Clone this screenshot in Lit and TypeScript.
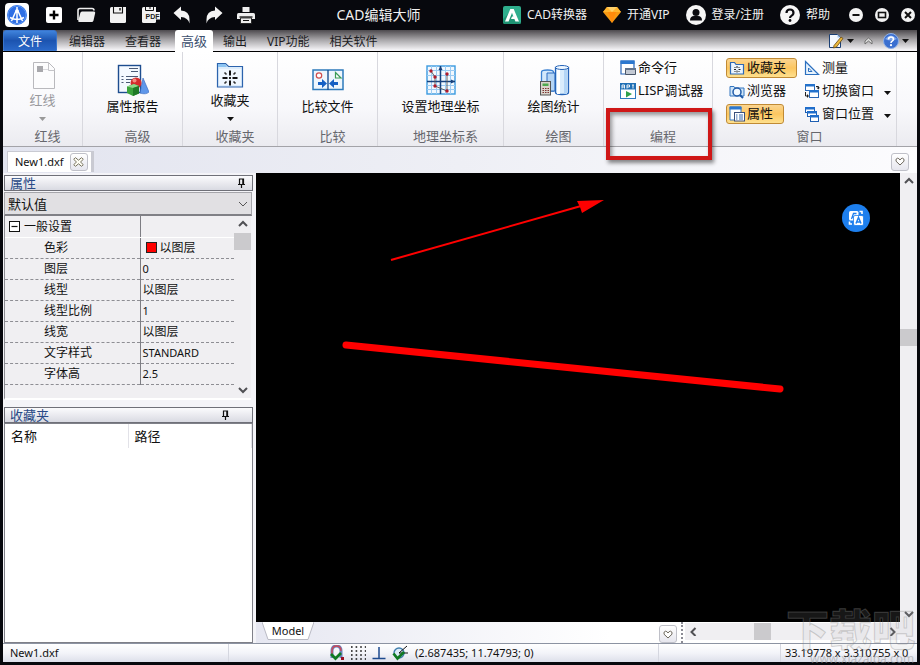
import { LitElement, html, css, svg, TemplateResult, SVGTemplateResult } from "lit";
import { customElement, property } from "lit/decorators.js";
import { classMap } from "lit/directives/class-map.js";
import { styleMap } from "lit/directives/style-map.js";

const icon = (w: number, h: number, body: SVGTemplateResult): TemplateResult =>
  html`<svg width=${w} height=${h} viewBox="0 0 ${w} ${h}" aria-hidden="true">${body}</svg>`;

/* ---------- title bar icons ---------- */
const logo = icon(24, 24, svg`
  <rect width="24" height="24" rx="4" fill="#fff"/>
  <circle cx="12" cy="12" r="10" fill="#2f6fe4"/>
  <circle cx="12" cy="12" r="9" fill="none" stroke="#5c97f5"/>
  <path d="M12 4v3M11.500 7 6.500 18M12.500 7l5 11M5 14.500q7 4 14 0M12 8v12" fill="none" stroke="#fff" stroke-width="1.500"/>
  <circle cx="12" cy="8" r="1.800" fill="#fff"/>`);

const quick: [string, TemplateResult][] = [
  ["新建", icon(20, 20, svg`<rect x="2" y="2" width="16" height="16" rx="2" fill="#fff"/><path d="M10 5.500v9M5.500 10h9" stroke="#000" stroke-width="2.400"/>`)],
  ["打开", icon(20, 20, svg`<path d="M2 15V5.500q0-2 2-2h12q2 0 2 2" fill="none" stroke="#eee" stroke-width="1.600"/><path d="M6 6.500H18q1.500 0 1.200 1.500l-1.700 7.500q-.4 1.500-1.900 1.500H3.500q-1.700 0-1.200-1.500l2-7.500Q4.600 6.500 6 6.500z" fill="#eee"/>`)],
  ["保存", icon(20, 20, svg`<path d="M2 3.500Q2 2 3.500 2H18v14.500q0 1.500-1.500 1.500h-13Q2 18 2 16.500z" fill="#f2f2f2"/><path d="M5.500 2v6h9V2" fill="none" stroke="#111" stroke-width="1.100"/><path d="M12 3v2.500" stroke="#111" stroke-width="1.400"/>`)],
  ["导出 PDF", icon(20, 20, svg`<path d="M2 3.500Q2 2 3.500 2H16v14.500q0 1.500-1.500 1.500h-11Q2 18 2 16.500z" fill="#f2f2f2"/><path d="M5.500 2v3.500h8V2M10 2v2" fill="none" stroke="#111"/><rect x="4.500" y="7" width="15.500" height="7.500" fill="#f2f2f2"/><text x="5.500" y="13.500" font-family="Liberation Sans" font-weight="700" font-size="7" fill="#222">PDF</text>`)],
  ["撤销", icon(20, 20, svg`<path d="M1.500 8 9 1.500v4q8.500.5 8.500 9v4q-1.500-6-8.500-6.500v3z" fill="#f4f4f4"/>`)],
  ["重做", icon(20, 20, svg`<path d="M18.500 8 11 1.500v4q-8.500.5-8.500 9v4q1.500-6 8.500-6.500v3z" fill="#f4f4f4"/>`)],
  ["打印", icon(20, 20, svg`<path d="M6.500 2h7v5h-7z" fill="#eee"/><path d="M1 9.500Q1 8 2.500 8h15Q19 8 19 9.500V14H1z" fill="#eee"/><path d="M3.500 12h13" stroke="#111" stroke-width="1.300"/><path d="M4.500 13h11v5.500h-11z" fill="#eee" stroke="#111" stroke-width=".8"/><path d="M7 15.500h6" stroke="#111"/>`)],
];

const converter = icon(18, 18, svg`<rect width="18" height="18" rx="2" fill="#2fae8d"/><path d="M0 13 6 7l12 11H2q-2 0-2-2z" fill="#1f9474"/><path d="M2 15.500 7.300 3h3.400L16 15.500h-3.600l-1-2.500H8l1-2.600h1.400L9 6.800 5.600 15.500z" fill="#fff"/>`);
const diamond = icon(18, 16, svg`<path d="M4 0h10l4 5-9 11L0 5z" fill="#f79a12"/><path d="M4 0h10l4 5H0z" fill="#ffb52e"/><path d="M5 5h8l-4 11z" fill="#ff8a0c"/><path d="M4 0l5 5 5-5z" fill="#ffd06a"/>`);
const user = icon(20, 20, svg`<circle cx="10" cy="10" r="10" fill="#f6f6f6"/><circle cx="10" cy="7.500" r="3.500" fill="#0b0b10"/><path d="M4 15.500q0-4.500 4-4.500h4q4 0 4 4.500z" fill="#0b0b10"/>`);
const help = icon(20, 20, svg`<circle cx="10" cy="10" r="10" fill="#f6f6f6"/><path d="M6.500 8q0-3.500 3.500-3.500T13.500 8q0 1.500-1.800 2.600Q10 11.500 10 13" fill="none" stroke="#0b0b10" stroke-width="2.200"/><circle cx="10" cy="15.500" r="1.400" fill="#0b0b10"/>`);
const winMin = icon(14, 14, svg`<circle cx="7" cy="7" r="7" fill="#f3f3f3"/><path d="M3.500 7h7" stroke="#111" stroke-width="2"/>`);
const winMax = icon(14, 14, svg`<circle cx="7" cy="7" r="7" fill="#f3f3f3"/><rect x="3.500" y="4.500" width="7" height="5" fill="none" stroke="#111" stroke-width="1.600"/>`);
const winClose = icon(14, 14, svg`<circle cx="7" cy="7" r="7" fill="#f3f3f3"/><path d="M4 4l6 6M10 4l-6 6" stroke="#111" stroke-width="2"/>`);

/* ---------- menu bar icons ---------- */
const editPage = icon(16, 16, svg`<path d="M1.500 1.500h8l3 3v10h-11z" fill="#f4f9ff" stroke="#1b3f73"/><path d="M9.500 1.500v3h3z" fill="#9fc4ee"/><path d="M6 12.500 13 4l2 1.500L8.500 14 5.500 15z" fill="#eab73c" stroke="#6a4a12" stroke-width=".8"/>`);
const helpBall = icon(16, 16, svg`<circle cx="8" cy="8" r="7.500" fill="#3a6fd0" stroke="#8fb0e6"/><path d="M2 6q6-7 12 0-6 3-12 0z" fill="#7fa6ea"/><path d="M5.500 6.500q0-2.500 2.500-2.500t2.500 2.300q0 1-1.300 1.800Q8 8.800 8 10" fill="none" stroke="#fff" stroke-width="1.600"/><circle cx="8" cy="12.200" r="1.100" fill="#fff"/>`);
const chevUp = icon(9, 8, svg`<path d="M1 4l3.500-3L8 4v3L4.500 4 1 7z" fill="#ddd" stroke="#666" stroke-width=".9"/>`);
const caret = (c = "#111") => icon(7, 4, svg`<path d="M0 0h7L3.500 4z" fill=${c}/>`);

/* ---------- ribbon icons ---------- */
const bigRedline = icon(32, 32, svg`<path d="M6.500 2.500h15l6 6v20h-21z" fill="#fcfcfd" stroke="#b9b9bd"/><path d="M21.500 2.500v8h6" fill="none" stroke="#c4c4c8"/><rect x="10" y="6" width="6" height="6" fill="#a8a8ac"/><path d="M16 9.500h5" stroke="#dadade"/>`);
const bigReport = icon(32, 32, svg`<rect x="1.500" y="1.500" width="22" height="27" fill="#f4f9ff" stroke="#1d4d8f" stroke-width="1.400"/>
  <path d="M12 4.500h9M14 7.500h7M4.500 12.500h2M9 12.500h12M4.500 15.500h2M9 15.500h7M4.500 18.500h2M9 18.500h4" stroke="#4a5a76"/>
  <path d="M26 14l6 14q-3 3-9 1z" fill="#5f97ea" stroke="#2f63bc" stroke-width=".6"/><circle cx="19" cy="19" r="5.500" fill="#d42c2c"/><circle cx="17.500" cy="16.500" r="2" fill="#f38b80"/>
  <path d="M10 22.500l7-2.500 5 2v7.500l-6 2.500-6-3z" fill="#3ba33c"/><path d="M10 22.500l7-2.500 5 2-6 2z" fill="#8fd98a"/><path d="M16 24v8l6-2.500V22z" fill="#1f7a27"/>`);
const bigFolder = icon(32, 32, svg`<path d="M3.500 3.500h8l3 3h14v20.500h-25z" fill="#dcecfb" stroke="#2c63ad" stroke-width="1.200"/><path d="M5 9h22v16H5z" fill="#f0f7fe"/><path d="M4 4h7l2 3H4z" fill="#8cc4f2"/>
  <path d="M16 10.500v5M16 20.500v5M8.500 18h5M18.500 18h5" stroke="#111" stroke-width="2"/><path d="M10.500 12.500l2 2M21.500 12.500l-2 2M10.500 23.500l2-2M21.500 23.500l-2-2" stroke="#333" stroke-width="1.700"/><rect x="15" y="17" width="2" height="2" fill="#222"/>`);
const bigCompare = icon(32, 32, svg`<rect x="1" y="6" width="30" height="19.500" fill="#eef6fd" stroke="#2d7abb" stroke-width="1.500"/><path d="M16 6v20" stroke="#174f91" stroke-width="1.400"/>
  <circle cx="7" cy="11.500" r="2.700" fill="#fff" stroke="#cf4d4d" stroke-width="1.200"/><path d="M23.500 8.500v5.500h5.500z" fill="#fff" stroke="#3a9b55" stroke-width="1.200"/>
  <path d="M6 18h4v-3l5 4.500-5 4.500v-3H6zM26 18h-4v-3l-5 4.500 5 4.500v-3h4z" fill="#1560c4"/>`);
const bigGeo = icon(32, 32, svg`<rect x="2" y="2" width="28" height="28" fill="#f2f8fe" stroke="#3a9ae0" stroke-width="1.400"/>
  <path d="M6.500 2v28M11.500 2v28M20.500 2v28M25.500 2v28M2 6.500h28M2 11.500h28M2 21.500h28M2 25.500h28" stroke="#9ccbf2"/>
  <path d="M15.500 2v28M2 17.500h28" stroke="#16417d" stroke-width="1.500"/><path d="M13.500 6l2-4 2 4zM26 15.500l4 2-4 2z" fill="#16417d"/>
  <path d="M6 7l4 6v9l12 5V10" fill="none" stroke="#555" stroke-width=".9"/><g fill="#b01b2c"><circle cx="6" cy="7" r="1.700"/><circle cx="10" cy="13" r="1.700"/><circle cx="10" cy="22" r="1.700"/><circle cx="22" cy="27" r="1.700"/><circle cx="22" cy="10" r="1.700"/></g>`);
const bigStats = icon(32, 32, svg`<path d="M3.500 8q0-2 6-2t6 2v19h-12z" fill="#d3e8fb" stroke="#3c82d2" stroke-width="1.300"/><path d="M9 9v18h8V9z" fill="#b5d5f5" stroke="#2d6cc0"/>
  <path d="M17.500 3.500v25q0 2 6.500 2t6.500-2v-25z" fill="#d9ecfc" stroke="#2563b8" stroke-width="1.300"/><path d="M20.500 5v25" stroke="#fff" stroke-width="3"/><path d="M27.500 5v25" stroke="#b3d5f6" stroke-width="3"/><ellipse cx="24" cy="3.500" rx="6.500" ry="2" fill="#eef7ff" stroke="#2563b8"/>
  <rect x="2.500" y="17.500" width="10" height="13.500" fill="#d9d4cc" stroke="#555"/><rect x="4.500" y="19.500" width="6" height="2.500" fill="#4faa4e"/><path d="M4.500 24.500h7M4.500 26.500h7M4.500 28.500h7" stroke="#7d3232" stroke-dasharray="1.500 1"/>`);

const smCommand = icon(16, 16, svg`<path d="M1 1h13v13H1z" fill="#fff" stroke="#2a66b8" stroke-width="1.200"/><path d="M.5.500h14V4H.5z" fill="#2d78cf"/><path d="M5.500 8.500h10v6h-10z" fill="#c3c9d3" stroke="#4a5668"/><path d="M5 8h11v2H5z" fill="#63748d"/>`);
const smApi = icon(16, 16, svg`<rect x=".5" y="6" width="15" height="9.500" fill="#fff" stroke="#2d7ac0"/><rect width="16" height="6" fill="#1f6fb5"/><path d="M2 5.500V2h2.500v3.500M2 4h2.500M7 5.500V2h2.500v2H7M12 2h2M13 2v3.500" stroke="#fff" fill="none" stroke-width=".9"/><path d="M6 8l6 3-6 3.500z" fill="#2fa14a"/>`);
const smFav = icon(16, 16, svg`<path d="M1.500 2.500h4l1.500 2h7.500v9.500h-13z" fill="#eaf4fe" stroke="#2d69b5" stroke-width="1.200"/><path d="M8 6v2M8 10.500v2M5 9.500h2M9.500 9.500h2M5.500 7l1 1M10.500 7l-1 1M5.500 12l1-1M10.500 12l-1-1" stroke="#222"/>`);
const smBrowse = icon(16, 16, svg`<path d="M1 3.500h4l1 1.500h9v8H1z" fill="#cfe5f8" stroke="#3577c0"/><circle cx="8" cy="9" r="4" fill="#f2f9ff" stroke="#1f5aa8" stroke-width="1.500"/><path d="M11 12l3 3" stroke="#1f5aa8" stroke-width="2"/>`);
const smProps = icon(16, 16, svg`<path d="M1 1h11v13H1z" fill="#fff" stroke="#3577c0"/><path d="M.5.500h12V3.500H.5z" fill="#2d78cf"/><rect x="5.500" y="6.500" width="10" height="8.500" fill="#fff" stroke="#3a4f7c"/><path d="M7 9h1.500M10 9h4M7 11h1.500M10 11h4M7 13h1.500M10 13h4" stroke="#3569ad"/>`);
const smMeasure = icon(16, 16, svg`<path d="M1.500 1.500v13h13z" fill="#e8f3fd" stroke="#2b6fbf" stroke-width="1.200"/><path d="M4.500 8v3.500H8z" fill="#fff" stroke="#2b6fbf"/>`);
const smSwitch = icon(16, 16, svg`<rect x="1.500" y="1.500" width="9" height="6" fill="#fff" stroke="#2b67b4"/><path d="M1 1h10v2.500H1z" fill="#2472cc"/><rect x="5.500" y="7.500" width="9" height="7" fill="#fff" stroke="#2b67b4"/><path d="M5 7h10v2.500H5z" fill="#2472cc"/><path d="M12 3.500h2.500V5M1.500 9v4H4" fill="none" stroke="#222"/><path d="M12.500 4.500h3.500l-1.700 2zM3 11l2 2-2 2z" fill="#222"/>`);
const smPosition = icon(16, 16, svg`<rect x="1.500" y="1.500" width="9" height="5" fill="#fff" stroke="#1f5fb2"/><path d="M1 1h10v2.500H1z" fill="#1f6dcb"/><rect x="3.500" y="5.500" width="9" height="5" fill="#fff" stroke="#1f5fb2"/><path d="M3 5h10v2.500H3z" fill="#1f6dcb"/><rect x="6.500" y="9.500" width="8" height="6" fill="#fff" stroke="#1f5fb2"/><path d="M6 9h9v2.500H6z" fill="#1f6dcb"/>`);

/* ---------- panel and status icons ---------- */
const pin = icon(9, 10, svg`<path d="M2.500 6V1h4v5M1 6.500h7M4.500 6v4" fill="none" stroke="#111" stroke-width="1.200"/><path d="M6 1v5" stroke="#111" stroke-width="1.500"/>`);
const heart = icon(10, 9, svg`<path d="M5 8 1 4.200Q.5 1.500 2.500 1.200 4 1.200 5 3q1-1.800 2.500-1.800Q9.500 1.500 9 4.200z" fill="#fff" stroke="#6c675c"/>`);
const cross = icon(11, 10, svg`<path d="M2.500.7 5.500 3.200 8.500.7l1.800 1.600L7.500 5l2.800 2.700-1.800 1.600-3-2.500-3 2.500L.7 7.700 3.500 5 .7 2.300z" fill="#fffef4" stroke="#77735f"/>`);
const toggleBox = icon(11, 11, svg`<rect x=".5" y=".5" width="10" height="10" fill="#fff" stroke="#111"/><path d="M2.500 5.500h6" stroke="#111" stroke-width="1.200"/>`);
const translate = icon(16, 16, svg`<rect x="1" y="1" width="9.500" height="9.500" rx="1.500" fill="#fff"/><path d="M3.500 9 5.500 3.500h3M4.500 7h2" fill="none" stroke="#1d7fee" stroke-width="1.300"/><rect x="5.500" y="5.500" width="10" height="10" rx="1.500" fill="#fff" stroke="#1d7fee" stroke-width=".8"/><path d="M8 13.500 10.500 7.500 13 13.500M9 12h3" fill="none" stroke="#1d7fee" stroke-width="1.500"/><path d="M11.500 1.500H14V4M1.500 11.500V14H4" fill="none" stroke="#fff" stroke-width="1.600"/>`);
const stSnap = icon(16, 16, svg`<path d="M3 13V6q0-5 4.500-5T12 6v7" fill="none" stroke="#6b86bd" stroke-width="3"/><path d="M3 9V6q0-5 4.500-5T12 6" fill="none" stroke="#c9495a" stroke-width="1.500"/><path d="M2 9l4.500 4.500L12 8" fill="none" stroke="#0f7a22" stroke-width="2.800"/><rect x="12" y="12" width="3" height="3" fill="#9c1022"/>`);
const stGrid = icon(16, 16, svg`<path d="M1 2h15M1 6h15M1 10h15M1 14h15" stroke="#111" stroke-width="1.600" stroke-dasharray="1.600 3"/>`);
const stOrtho = icon(16, 16, svg`<path d="M8 2v11M1.500 13.500h13" stroke="#1d4a8e" stroke-width="1.500"/>`);
const stSnapPt = icon(16, 16, svg`<circle cx="7" cy="8" r="5" fill="#dcecf8" stroke="#3f7dad" stroke-width="1.400"/><path d="M7 8l8-7M7 8h9" stroke="#111"/><path d="M1.500 8.500l4 5L12 7" fill="none" stroke="#0f7a22" stroke-width="2.800"/>`);

const arrowPaths: Record<string, string> = {
  up: "M1 6l4-4 4 4", down: "M1 3l4 4 4-4", left: "M6.500 1l-4 4 4 4", right: "M3.500 1l4 4-4 4",
};

@customElement("scroll-bar")
export class ScrollBar extends LitElement {
  @property({ type: Boolean, reflect: true }) horizontal = false;
  @property({ type: Number }) position = 0;

  static styles = css`
    :host { display: flex; flex-direction: column; background: #f0eff2; width: 17px; }
    :host([horizontal]) { flex-direction: row; width: auto; height: 17px; }
    button { flex: none; width: 17px; height: 17px; padding: 0; border: 0; background: none; display: grid; place-items: center; }
    .thumb { flex: none; width: 17px; height: 17px; background: #cbcacd; }
    .space { flex-basis: 0; }
  `;

  private arrow(dir: string, label: string) {
    return html`<button aria-label=${label}>${icon(10, 9, svg`<path d=${arrowPaths[dir]} fill="none" stroke="#505054" stroke-width="2"/>`)}</button>`;
  }

  render() {
    const h = this.horizontal;
    return html`
      ${this.arrow(h ? "left" : "up", h ? "向左" : "向上")}
      <span class="space" style=${styleMap({ flexGrow: String(this.position) })}></span>
      <span class="thumb"></span>
      <span class="space" style=${styleMap({ flexGrow: String(100 - this.position) })}></span>
      ${this.arrow(h ? "right" : "down", h ? "向右" : "向下")}`;
  }
}

interface BigItem { name: string; group: string; icon: TemplateResult; size: string; menu?: boolean; disabled?: boolean }

const bigItems: BigItem[] = [
  { name: "红线", group: "红线", icon: bigRedline, size: "g80", menu: true, disabled: true },
  { name: "属性报告", group: "高级", icon: bigReport, size: "g100" },
  { name: "收藏夹", group: "收藏夹", icon: bigFolder, size: "g95", menu: true },
  { name: "比较文件", group: "比较", icon: bigCompare, size: "g100" },
  { name: "设置地理坐标", group: "地理坐标系", icon: bigGeo, size: "g126" },
  { name: "绘图统计", group: "绘图", icon: bigStats, size: "g100" },
];

const rows: [string, string, boolean?][] = [
  ["色彩", "以图层", true], ["图层", "0"], ["线型", "以图层"], ["线型比例", "1"],
  ["线宽", "以图层"], ["文字样式", "STANDARD"], ["字体高", "2.5"],
];

@customElement("app-root")
export class AppRoot extends LitElement {
  static styles = css`
    :host {
      display: flex; flex-direction: column; box-sizing: border-box; min-height: 100vh; position: relative;
      overflow: hidden; background: #07080d; padding: 0 3px 3px;
      font: 12px/16px "Noto Sans", "Noto Sans CJK SC", sans-serif; color: #111;
    }
    * { box-sizing: border-box; }
    svg { display: block; flex: none; }
    button, select { font: inherit; color: inherit; }
    button { padding: 0; border: 0; background: none; white-space: nowrap; }

    .title { display: flex; align-items: center; height: 30px; color: #f0f0f0; }
    .title button, .title a { display: flex; align-items: center; justify-content: center; gap: 6px; color: inherit; text-decoration: none; }
    .logo { padding: 0 9px 0 2px; }
    .quick { display: flex; }
    .quick button { width: 32px; height: 30px; }
    h1 { flex: 1; margin: 0; padding-right: 8px; font-size: 14px; font-weight: 400; text-align: center; }
    .links { display: flex; gap: 16px; }
    .window { display: flex; gap: 12px; padding: 0 2px 0 19px; }

    .menu { display: flex; height: 22px; padding-right: 8px; border-bottom: 1px solid #000; background: linear-gradient(#4d4a4e, #a5a3a6 45%, #f4f3f6 95%); }
    .menu nav { display: flex; flex: 1; }
    .menu nav button { padding: 2px 10px 0; height: 21px; color: #1c1c1f; }
    .menu nav .file { width: 54px; margin: 0 2px 0 0; border-radius: 3px 3px 0 0; background: linear-gradient(#3f83dc, #1c54b0 50%, #2a68c8); border: 1px solid #3a75cc; color: #fff; }
    .menu nav .on { margin: 0 0 0 4px; padding: 0 6px; height: 22px; font-size: 13px; background: #fff; border-radius: 3px 3px 0 0; color: #3c4f6e; }
    .tools { display: flex; align-items: center; gap: 10px; }
    .tools button { display: flex; align-items: center; gap: 3px; }

    .ribbon { display: flex; height: 95px; border-bottom: 1px solid #a3a3a8; background: linear-gradient(#fff, #f8f8fb 60%, #ebebf0); font-size: 13px; }
    .group { display: flex; flex-direction: column; position: relative; flex: none; border-right: 1px solid #d8d8de; }
    .g80 { width: 80px; } .g95 { width: 95px; } .g100 { width: 100px; } .g126 { width: 126px; } .g109 { width: 109px; } .g184 { width: 184px; }
    .group h2 { margin: auto 0 0; padding-left: 10px; font-size: 13px; font-weight: 400; line-height: 20px; text-align: center; color: #66676d; }
    .big { display: flex; flex-direction: column; align-items: center; padding-top: 12px; line-height: 20px; }
    .big.menuitem { padding-top: 8px; line-height: 16px; }
    .big .drop { margin-top: 9px; }
    .big.off { color: #98989c; }
    .stack { display: flex; flex-direction: column; align-items: flex-start; gap: 3px; padding-top: 6px; }
    .cols { display: flex; gap: 4px; padding-left: 13px; }
    .small { display: flex; align-items: center; gap: 2px; height: 20px; padding: 0 10px 0 2px; border: 1px solid transparent; border-radius: 3px; }
    .small.pressed { border-color: #c08a35; background: linear-gradient(#fbd590, #fcc660 50%, #fee08e); }
    .small .drop { margin-left: 8px; margin-top: 5px; }
    .small.wide { padding-right: 0; }
    .small span { line-height: 18px; padding-bottom: 2px; }
    .mark { position: absolute; inset: 56px 0 -14px 2px; z-index: 2; border: 4px solid #cf1717; box-shadow: 2px 3px 4px #0007, inset 2px 3px 4px #0006; pointer-events: none; }

    .tabs { display: flex; align-items: center; justify-content: space-between; height: 26px; padding: 4px 8px 1px 4px; background: linear-gradient(90deg, #e2e4ef, #eeeff5 50%, #fcfcfe); }
    .tab { display: flex; align-items: center; gap: 6px; height: 21px; padding: 0 3px 0 7px; background: #fff; border: solid #c9cad2; border-width: 1px 3px 0 1px; font-size: 11px; }
    .chip { display: grid; place-items: center; width: 18px; height: 18px; border: 1px solid #bfc0c8; border-radius: 3px; background: linear-gradient(#fff, #e6e6ee); }

    .work { display: flex; flex: 1; background: #f0eff4; }
    .side { display: flex; flex-direction: column; flex: none; width: 253px; padding: 2px 3px 0 1px; background: #f4f4f8; }
    .head { display: flex; align-items: center; justify-content: space-between; height: 16px; padding: 0 6px 0 5px; border: 1px solid #6f7078; background: linear-gradient(#fbfbfd, #d9dae2); }
    .head h2 { margin: 0; font-size: 13px; line-height: 14px; font-weight: 400; color: #294a86; }
    .head.fav { margin-top: 7px; padding-right: 22px; }
    .pick { position: relative; display: block; margin: 1px 1px 0 0; }
    .pick select { display: block; width: 100%; height: 24px; padding: 0 3px; border: 1px solid #a5a5aa; border-bottom: 2px solid #808086; border-radius: 0; appearance: none; background: #e1e0e3; font-size: 13px; }
    .pick svg { position: absolute; right: 4px; top: 9px; }
    .props { display: flex; height: 184px; margin-right: 2px; border-left: 1px solid #8c8c92; border-bottom: 2px solid #fff; background: #f0eff2; }
    .grid { flex: 1; }
    table { width: 100%; border-collapse: collapse; table-layout: fixed; }
    .grid th, .grid td { height: 21px; padding: 0 0 0 2px; border-bottom: 1px dashed #8e8e94; text-align: left; font-weight: 400; line-height: 20px; }
    .grid th { width: 135px; padding-left: 39px; border-right: 1px solid #7d7d83; }
    .grid td { font-size: 12px; }
    .grid .num { font-size: 11px; }
    .grid .section th { padding-left: 4px; }
    .grid .section th, .grid .section td { border-bottom: 1px solid #fff; }
    .section button { display: flex; align-items: center; gap: 4px; height: 20px; padding-top: 1px; }
    .swatch { display: inline-block; width: 11px; height: 11px; margin: 0 3px; border: 1px solid #222; background: #f00; vertical-align: -1px; }
    .list { flex: 1; border: 1px solid #7f8088; background: #fff; }
    .list th { height: 24px; padding: 0 6px; text-align: left; font-weight: 400; font-size: 13px; border-right: 1px solid #e2e2e8; }
    .list th:first-child { width: 123px; }

    .main { display: grid; flex: 1; grid-template: 1fr 21px / 1fr 17px; }
    .canvas { position: relative; background: #000; }
    .canvas > svg { position: absolute; inset: 0; width: 100%; height: 100%; }
    .float { position: absolute; top: 31px; right: 30px; display: grid; place-items: center; width: 28px; height: 28px; border-radius: 50%; background: #1d7fee; }
    .foot { display: flex; background: linear-gradient(90deg, #e6e7f1, #fff 55%); }
    .models { flex: 1; padding-left: 6px; }
    .model { position: relative; display: block; width: 52px; height: 18px; font-size: 11px; }
    .model svg { position: absolute; inset: 0; }
    .model span { position: relative; }
    .foot .chip { margin: 3px 4px 0 0; }
    .grip { width: 2px; margin-right: 2px; border-left: 2px dotted #8b8b94; }
    .foot scroll-bar { width: 215px; margin-top: 1px; }

    .status { display: flex; align-items: center; height: 19px; border-top: 1px solid #8c93a2; background: linear-gradient(#fff, #f3f4f9 50%, #dddfea); font-size: 11px; }
    .status > div { display: flex; align-items: center; height: 18px; }
    .status .name { width: 226px; padding-left: 7px; border-right: 1px solid #d5d7e0; }
    .status .modes { flex: 1; gap: 5px; padding-left: 100px; }
    .status output { margin-left: 2px; }
    .status .mid { width: 123px; border: solid #d5d7e0; border-width: 0 1px; }
    .status .size { width: 136px; padding-left: 4px; white-space: nowrap; }

    .stamp { position: absolute; right: 0; bottom: 0; width: 134px; pointer-events: none; line-height: 46px; font-size: 43px; font-weight: 900; white-space: nowrap; color: #bbbbbb22; -webkit-text-stroke: 1px #88888860; }
    .stamp small { display: block; padding-left: 24px; font-size: 12px; line-height: 12px; font-weight: 400; color: #9998; -webkit-text-stroke: 0; }
  `;

  private small(name: string, ic: TemplateResult, opts: { pressed?: boolean; menu?: boolean } = {}) {
    return html`<button class=${classMap({ small: true, pressed: !!opts.pressed, wide: !!opts.menu })}>
      ${ic}<span>${name}</span>${opts.menu ? html`<span class="drop">${caret()}</span>` : ""}
    </button>`;
  }

  private bigGroup(i: BigItem) {
    return html`<section class="group ${i.size}">
      <button class=${classMap({ big: true, menuitem: !!i.menu, off: !!i.disabled })} ?disabled=${i.disabled}>
        ${i.icon}<span>${i.name}</span>
        ${i.menu ? html`<span class="drop">${caret(i.disabled ? "#999" : "#111")}</span>` : ""}
      </button>
      <h2>${i.group}</h2>
    </section>`;
  }

  render() {
    return html`
      <header class="title">
        <span class="logo">${logo}</span>
        <div class="quick">${quick.map(([n, i]) => html`<button aria-label=${n}>${i}</button>`)}</div>
        <h1>CAD编辑大师</h1>
        <div class="links">
          <a href="#converter">${converter}CAD转换器</a>
          <a href="#vip">${diamond}开通VIP</a>
          <a href="#login">${user}登录/注册</a>
          <a href="#help">${help}帮助</a>
        </div>
        <div class="window">
          <button aria-label="最小化">${winMin}</button>
          <button aria-label="最大化">${winMax}</button>
          <button aria-label="关闭">${winClose}</button>
        </div>
      </header>

      <div class="menu">
        <nav>
          <button class="file">文件</button>
          <button>编辑器</button><button>查看器</button>
          <button class="on">高级</button>
          <button>输出</button><button>VIP功能</button><button>相关软件</button>
        </nav>
        <div class="tools">
          <button aria-label="编辑">${editPage}${caret()}</button>
          <button aria-label="收起">${chevUp}</button>
          <button aria-label="帮助">${helpBall}${caret()}</button>
        </div>
      </div>

      <div class="ribbon">
        ${bigItems.map((i) => this.bigGroup(i))}
        <section class="group g109">
          <div class="cols"><div class="stack">
            ${this.small("命令行", smCommand)}${this.small("LISP调试器", smApi)}
          </div></div>
          <h2>编程</h2>
          <span class="mark"></span>
        </section>
        <section class="group g184">
          <div class="cols">
            <div class="stack">
              ${this.small("收藏夹", smFav, { pressed: true })}
              ${this.small("浏览器", smBrowse)}
              ${this.small("属性", smProps, { pressed: true })}
            </div>
            <div class="stack">
              ${this.small("测量", smMeasure)}
              ${this.small("切换窗口", smSwitch, { menu: true })}
              ${this.small("窗口位置", smPosition, { menu: true })}
            </div>
          </div>
          <h2>窗口</h2>
        </section>
      </div>

      <div class="tabs">
        <div class="tab">New1.dxf<button class="chip" aria-label="关闭标签">${cross}</button></div>
        <button class="chip" aria-label="标签列表">${heart}</button>
      </div>

      <div class="work">
        <aside class="side">
          <div class="head"><h2>属性</h2><button aria-label="固定">${pin}</button></div>
          <label class="pick">
            <select aria-label="对象"><option>默认值</option></select>
            ${icon(10, 6, svg`<path d="M1 1l4 4 4-4" fill="none" stroke="#555"/>`)}
          </label>
          <div class="props">
            <div class="grid">
              <table>
                <tr class="section"><th><button>${toggleBox}一般设置</button></th><td></td></tr>
                ${rows.map(([k, v, sw]) => html`<tr>
                  <th scope="row">${k}</th>
                  <td class=${classMap({ num: /^[\x20-\x7e]+$/.test(v) })}>${sw ? html`<span class="swatch"></span>` : ""}${v}</td>
                </tr>`)}
              </table>
            </div>
            <scroll-bar></scroll-bar>
          </div>
          <div class="head fav"><h2>收藏夹</h2><button aria-label="固定">${pin}</button></div>
          <div class="list"><table><tr><th>名称</th><th>路径</th></tr></table></div>
        </aside>

        <div class="main">
          <div class="canvas">
            <svg aria-hidden="true">
              <path d="M135 87 325 33" stroke="#f00" stroke-width="2"/>
              <path d="M348 27 321 28 324 34 326 40z" fill="#f00"/>
              <path d="M90 172 524 216" stroke="#f00" stroke-width="7" stroke-linecap="round"/>
            </svg>
            <button class="float" aria-label="翻译">${translate}</button>
          </div>
          <scroll-bar position="35"></scroll-bar>
          <div class="foot">
            <div class="models">
              <button class="model">${icon(52, 18, svg`<path d="M0 0h52l-6 17.500H6z" fill="#fff"/><path d="M0 0l6 17.500h40L52 0" fill="none" stroke="#b9bac4"/>`)}<span>Model</span></button>
            </div>
            <button class="chip" aria-label="布局列表">${heart}</button>
            <span class="grip"></span>
            <scroll-bar horizontal position="32"></scroll-bar>
          </div>
        </div>
      </div>

      <footer class="status">
        <div class="name">New1.dxf</div>
        <div class="modes">
          <button aria-label="捕捉">${stSnap}</button><button aria-label="栅格">${stGrid}</button>
          <button aria-label="正交">${stOrtho}</button><button aria-label="对象捕捉">${stSnapPt}</button>
          <output>(2.687435; 11.74793; 0)</output>
        </div>
        <div class="mid"></div>
        <div class="size">33.19778 x 3.310755 x 0</div>
      </footer>
      <div class="stamp">下载吧<small>www.xiazaiba.com</small></div>
    `;
  }
}
